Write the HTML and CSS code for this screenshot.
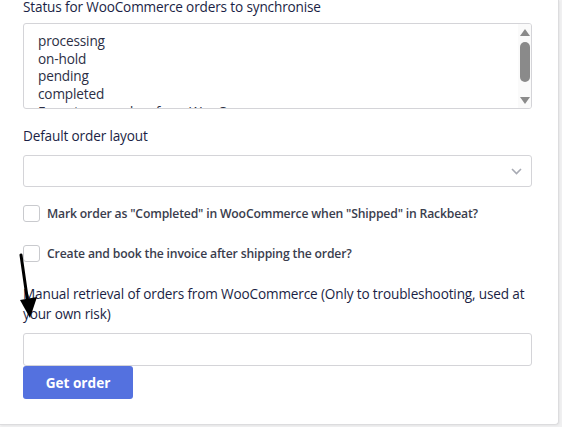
FILE: index.html
```html
<!DOCTYPE html>
<html>
<head>
<meta charset="utf-8">
<link rel="stylesheet" href="styles.css">
</head>
<body>
<div class="card">
  <form class="form">
    <div class="label label-top">Status for WooCommerce orders to synchronise</div>
    <div class="listbox">
      <div class="option">processing</div>
      <div class="option">on-hold</div>
      <div class="option">pending</div>
      <div class="option">completed</div>
      <div class="option">Export new orders from WooCommerce</div>
      <div class="scrollbar">
        <svg class="sb-up" width="10" height="7" viewBox="0 0 10 7"><polygon points="5,0 10,7 0,7" fill="#8a8a8a"/></svg>
        <div class="sb-thumb"></div>
        <svg class="sb-down" width="10" height="7" viewBox="0 0 10 7"><polygon points="0,0 10,0 5,7" fill="#8a8a8a"/></svg>
      </div>
    </div>

    <div class="label label-gap">Default order layout</div>
    <div class="select">
      <svg class="chev" width="11" height="7" viewBox="0 0 11 7"><polyline points="1,1 5.5,5.5 10,1" fill="none" stroke="#a7aab3" stroke-width="1.6"/></svg>
    </div>

    <label class="check check-1"><span class="box"></span><span class="check-text">Mark order as "Completed" in WooCommerce when "Shipped" in Rackbeat?</span></label>
    <label class="check check-2"><span class="box"></span><span class="check-text">Create and book the invoice after shipping the order?</span></label>

    <div class="label label-multi">Manual retrieval of orders from WooCommerce (Only to troubleshooting, used at your own risk)</div>
    <div class="input"></div>
    <button type="button" class="btn">Get order</button>
  </form>
  <svg class="arrow" width="40" height="80" viewBox="0 0 40 80">
    <line x1="3" y1="3" x2="10" y2="52" stroke="#000" stroke-width="3" stroke-linecap="round"/>
    <polygon points="2,48 19,45 12,66" fill="#000"/>
  </svg>
</div>
</body>
</html>
```

FILE: styles.css
```css
html, body {
  margin: 0;
  padding: 0;
}
body {
  background: #f0f0f1;
  font-family: "Open Sans", "Segoe UI", sans-serif;
  width: 562px;
  height: 427px;
  overflow: hidden;
}
.card {
  position: relative;
  background: #fff;
  width: 559px;
  height: 425px;
  border-right: 1px solid #dcdcde;
  border-bottom: 1px solid #dcdcde;
  border-bottom-right-radius: 4px;
  box-sizing: border-box;
  box-shadow: 1px 1px 2px rgba(0,0,0,0.04);
}
.form {
  display: flex;
  flex-direction: column;
  align-items: flex-start;
  padding: 0 0 0 23px;
  width: 509px;
}
.label {
  font-size: 13.6px;
  color: #1b1f45;
  line-height: 20px;
  letter-spacing: -0.15px;
}
.label-top {
  margin-top: -3px;
  margin-bottom: 6px;
}
.label-gap {
  margin-top: 17px;
  margin-bottom: 9px;
}
.listbox {
  position: relative;
  width: 509px;
  height: 86px;
  box-sizing: border-box;
  border: 1px solid #d4d4d8;
  border-radius: 3px;
  padding: 8px 14px;
  overflow: hidden;
  background: #fff;
}
.option {
  font-size: 13.6px;
  line-height: 17.7px;
  color: #2c2f45;
  letter-spacing: -0.15px;
  white-space: nowrap;
}
.scrollbar {
  position: absolute;
  top: 0;
  right: 0;
  width: 13px;
  height: 84px;
  background: #fafafa;
  display: flex;
  flex-direction: column;
  align-items: center;
}
.sb-up {
  margin-top: 5px;
}
.sb-thumb {
  margin-top: 6px;
  width: 10px;
  height: 40px;
  background: #8a8a8a;
  border-radius: 5px;
}
.sb-down {
  margin-top: auto;
  margin-bottom: 4px;
}
.select {
  width: 509px;
  height: 32px;
  box-sizing: border-box;
  border: 1px solid #d4d4d8;
  border-radius: 3px;
  display: flex;
  align-items: center;
  justify-content: flex-end;
  padding-right: 9px;
}
.check {
  display: flex;
  align-items: center;
  gap: 7px;
  height: 18px;
}
.check-1 {
  margin-top: 17px;
}
.check-2 {
  margin-top: 22px;
}
.box {
  width: 17px;
  height: 17px;
  box-sizing: border-box;
  border: 1px solid #c9cace;
  border-radius: 3px;
  background: #fff;
}
.check-text {
  font-size: 12.2px;
  font-weight: 600;
  color: #3a3d4d;
  letter-spacing: -0.17px;
}
.label-multi {
  margin-top: 22px;
  margin-bottom: 9px;
  width: 509px;
}
.input {
  width: 509px;
  height: 33px;
  box-sizing: border-box;
  border: 1px solid #d4d4d8;
  border-radius: 3px;
}
.btn {
  width: 110px;
  height: 33px;
  border: none;
  border-radius: 3px;
  background: #5471df;
  color: #fff;
  font-family: "Open Sans", "Segoe UI", sans-serif;
  font-weight: 700;
  font-size: 13.6px;
  padding: 0;
}
.arrow {
  position: absolute;
  left: 18px;
  top: 252px;
}
```
